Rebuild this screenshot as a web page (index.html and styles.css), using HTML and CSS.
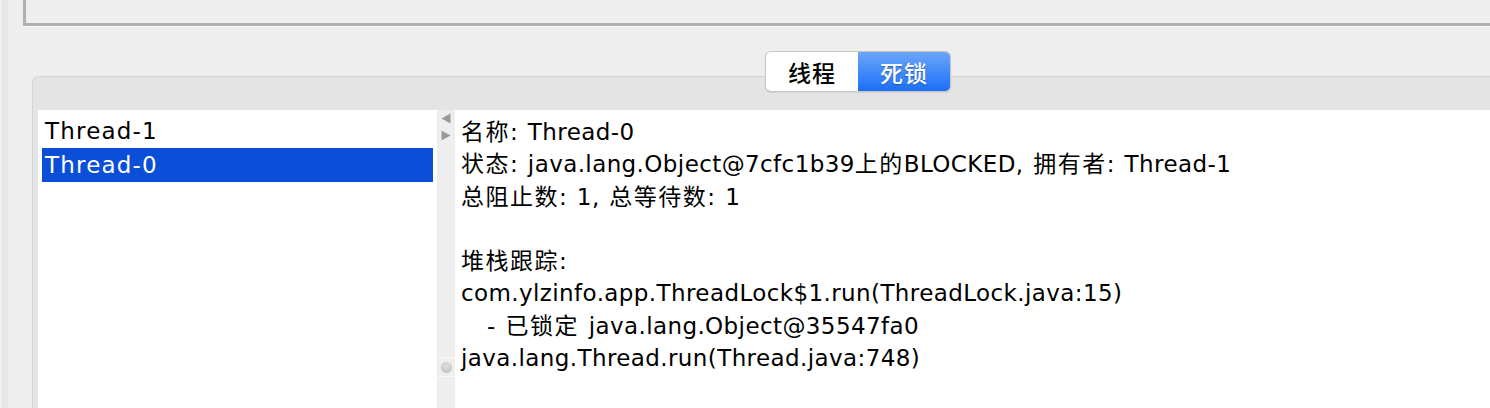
FILE: index.html
```html
<!DOCTYPE html>
<html lang="zh-CN">
<head>
<meta charset="utf-8">
<title>死锁</title>
<link rel="stylesheet" href="styles.css">
</head>
<body>
<div class="app">
  <div class="edge"></div>
  <div class="main">
    <div class="topbox"></div>
    <div class="tabs">
      <div class="seg">
        <div class="tab">线程</div>
        <div class="tab active">死锁</div>
      </div>
    </div>
    <div class="panel">
      <div class="list">
        <div class="item">Thread-1</div>
        <div class="item selected">Thread-0</div>
      </div>
      <div class="splitter">
        <svg class="arrow" width="10" height="11" viewBox="0 0 10 11"><path d="M0.5 5.5 L9.5 0.5 L9.5 10.5 Z" fill="#9a9a9a"/></svg>
        <svg class="arrow second" width="10" height="11" viewBox="0 0 10 11"><path d="M9.5 5.5 L0.5 0.5 L0.5 10.5 Z" fill="#9a9a9a"/></svg>
        <div class="grip"><div class="dot"></div></div>
      </div>
      <div class="detail">
        <div class="line"><span class="cjk">名称</span>: Thread-0</div>
        <div class="line"><span class="cjk">状态</span>: java.lang.Object@7cfc1b39<span class="cjk">上的</span>BLOCKED, <span class="cjk">拥有者</span>: Thread-1</div>
        <div class="line"><span class="cjk">总阻止数</span>: 1, <span class="cjk">总等待数</span>: 1</div>
        <div class="line">&nbsp;</div>
        <div class="line"><span class="cjk">堆栈跟踪</span>:</div>
        <div class="line">com.ylzinfo.app.ThreadLock$1.run(ThreadLock.java:15)</div>
        <div class="line indent">- <span class="cjk">已锁定</span> java.lang.Object@35547fa0</div>
        <div class="line">java.lang.Thread.run(Thread.java:748)</div>
      </div>
    </div>
  </div>
</div>
</body>
</html>
```
FILE: styles.css
```css
html, body {
  margin: 0;
  padding: 0;
}
body {
  width: 1490px;
  height: 408px;
  overflow: hidden;
  background: #eeeeee;
  font-family: "DejaVu Sans", "Noto Sans CJK SC", sans-serif;
  color: #000;
}
.app {
  display: flex;
  height: 408px;
}
.edge {
  width: 6px;
  flex: none;
  border-left: 2px solid #f0f0f0;
  background: #e7e7e7;
}
.main {
  flex: 1;
  display: flex;
  flex-direction: column;
  min-width: 0;
}
.topbox {
  margin-left: 15px;
  height: 23px;
  border-left: 3px solid #b0b0b0;
  border-bottom: 3px solid #b0b0b0;
  box-shadow: 0 1px 0 #fafafa;
  background: #eeeeee;
  flex: none;
}
.tabs {
  display: flex;
  padding-left: 758px;
  margin-top: 26px;
  position: relative;
  z-index: 1;
  flex: none;
}
.seg {
  display: flex;
  height: 39px;
  border-radius: 5px;
  box-shadow: 0 0 0 1px #c6c6c6, 0 1px 2px rgba(0,0,0,0.25);
  overflow: hidden;
}
.tab {
  width: 92px;
  display: flex;
  align-items: center;
  justify-content: center;
  font-size: 23px;
  letter-spacing: 1px;
  font-family: "Noto Sans CJK SC", sans-serif;
  font-weight: 500;
  background: #ffffff;
  color: #000;
}
.tab.active {
  background: linear-gradient(#6ba6fb, #1b6ff6);
  color: #fff;
  text-shadow: 0 1px 1px rgba(0,0,0,0.3);
}
.panel {
  margin-top: -15px;
  margin-left: 24px;
  flex: 1;
  border-top: 1px solid #d3d3d3;
  border-left: 1px solid #d3d3d3;
  border-top-left-radius: 7px;
  background: #e4e4e4;
  padding: 33px 0 0 5px;
  display: flex;
  min-height: 0;
}
.list {
  width: 391px;
  background: #ffffff;
  padding: 4px 4px 0 4px;
  flex: none;
  font-size: 23px;
  letter-spacing: 1.2px;
}
.item {
  height: 34px;
  line-height: 34px;
  padding-left: 3px;
}
.item.selected {
  background: #0b4fd8;
  color: #ffffff;
}
.splitter {
  width: 18px;
  flex: none;
  background: #eeeeee;
  display: flex;
  flex-direction: column;
  align-items: center;
  padding-top: 3px;
}
.arrow {
  display: block;
}
.arrow.second {
  margin-top: 6px;
}
.grip {
  margin-top: 216px;
  width: 18px;
  height: 18px;
  border-top: 1px solid #f8f8f8;
  border-bottom: 1px solid #f8f8f8;
  display: flex;
  align-items: center;
  justify-content: center;
}
.dot {
  width: 11px;
  height: 11px;
  border-radius: 50%;
  background: radial-gradient(circle at 50% 35%, #dedede, #bdbdbd);
}
.detail {
  flex: 1;
  background: #ffffff;
  padding: 6px 0 0 6px;
  font-size: 23px;
  letter-spacing: 0.4px;
  word-spacing: 2px;
  white-space: nowrap;
}
.line {
  height: 32.3px;
  line-height: 32.3px;
}
.cjk {
  font-family: "Noto Sans CJK SC", sans-serif;
  font-size: 23px;
  line-height: 1;
  letter-spacing: 1.5px;
}
.indent {
  padding-left: 26px;
}
```
